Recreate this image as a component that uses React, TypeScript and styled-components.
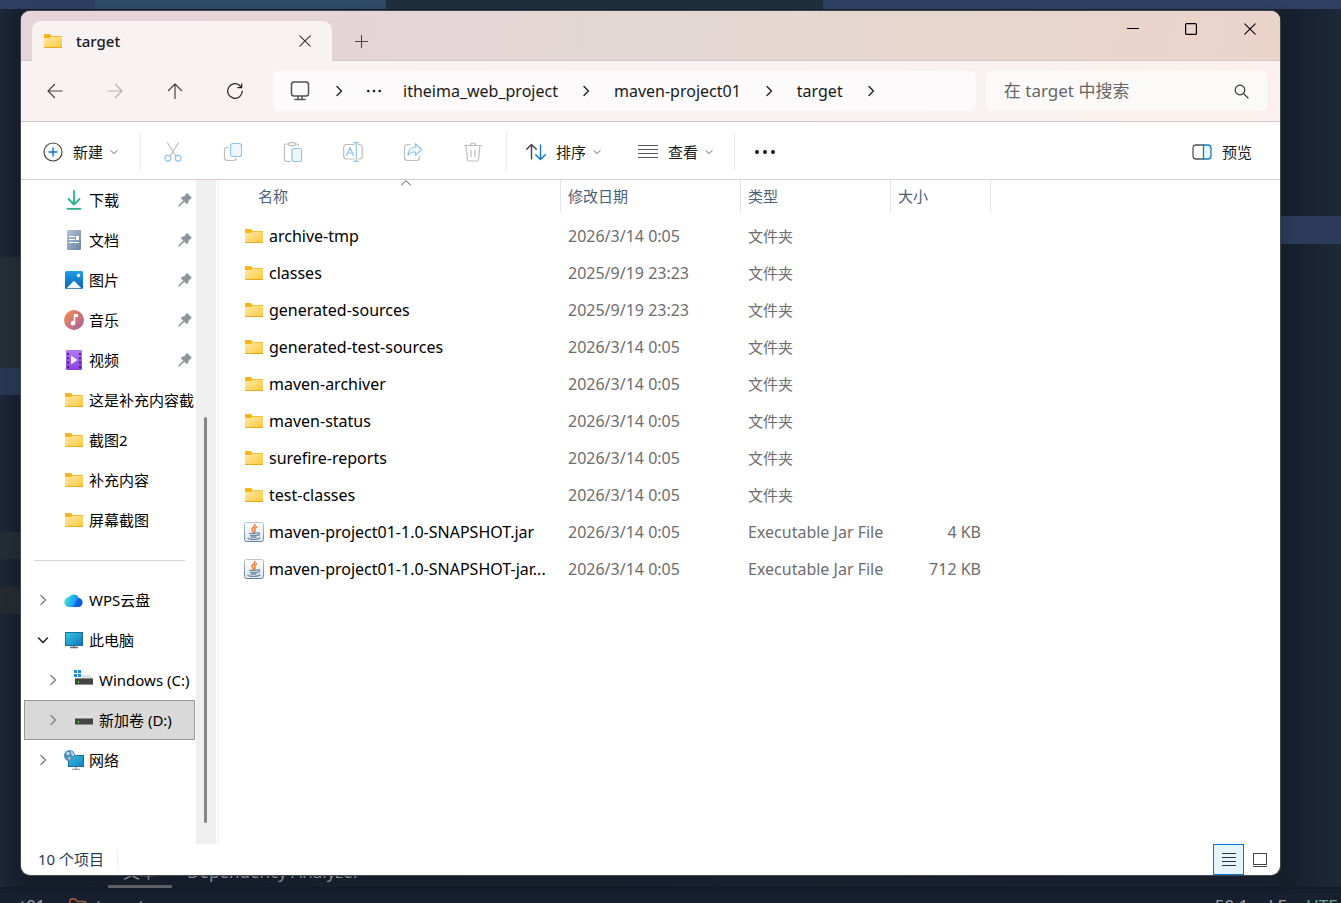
import React from 'react';
import styled, { createGlobalStyle, css } from 'styled-components';

const Global = createGlobalStyle`
  * { box-sizing: border-box; }
  body { margin: 0; background: #1b2434; font-family: "Noto Sans", "Noto Sans CJK SC", sans-serif; font-size: 15px; line-height: 20px; color: #1a1a1a; }
  button, input { font: inherit; color: inherit; }
  svg { display: block; flex: none; }
`;

const Desktop = styled.div`
  position: relative;
  display: flex;
  flex-direction: column;
  min-height: 100vh;
  overflow: hidden;
  background: linear-gradient(90deg, #1c2738 0, #18202f 21px, #1b2434 94%, #171f2d 96%, #1d2839 100%);
`;

const Editor = styled.div`
  position: absolute;
  inset: 0;
  display: flex;
  flex-direction: column;
  color: #9a9ea6;
  font-size: 17px;
`;

const EditorTop = styled.div`
  display: grid;
  grid-template-columns: 95px 291px 437px 1fr;
  height: 9px;
  flex: none;
`;

const Band = styled.div<{ $tone: string }>`
  background: ${(p) => p.$tone};
`;

const EditorBody = styled.div`
  flex: 1;
  display: flex;
  justify-content: space-between;
`;

const Gutter = styled.div<{ $width: number }>`
  width: ${(p) => p.$width}px;
  display: flex;
  flex-direction: column;
`;

const GutterBand = styled.div<{ $gap: number; $height: number; $tone: string }>`
  margin-top: ${(p) => p.$gap}px;
  height: ${(p) => p.$height}px;
  background: ${(p) => p.$tone};
`;

const EditorTabs = styled.div`
  display: flex;
  height: 32px;
  padding-left: 108px;
  border-bottom: 2px solid #131a26;
  flex: none;
`;

const EditorTab = styled.div<{ $active?: boolean }>`
  height: 31px;
  padding: 2px 15px 0;
  line-height: 26px;
  white-space: nowrap;
  ${(p) => p.$active && css`border-bottom: 3px solid #62666b;`}
`;

const EditorStatus = styled.div`
  display: flex;
  justify-content: space-between;
  height: 14px;
  padding: 5px 4px 0 20px;
  line-height: 24px;
  overflow: hidden;
  background: #182030;
  flex: none;
`;

const StatusGroup = styled.div<{ $gap: number }>`
  display: flex;
  align-items: flex-start;
  gap: ${(p) => p.$gap}px;
`;

const Encoding = styled.span`
  color: #6ea78f;
`;

const Window = styled.main`
  position: relative;
  flex: 1;
  display: flex;
  flex-direction: column;
  margin: 11px 61px 28px 21px;
  border-radius: 9px;
  overflow: hidden;
  background: #fff;
  box-shadow: 0 0 0 1px #424852, 0 6px 20px rgba(0, 0, 0, 0.2);
`;

const TitleBar = styled.header`
  display: flex;
  align-items: flex-end;
  height: 50px;
  padding-left: 11px;
  background: linear-gradient(100deg, #e7d3d9 0%, #e7d3d9 15%, #e2d7d4 48%, #e7d6cd 75%, #ebd3ca 100%);
  border-bottom: 1px solid #d9c6c9;
`;

const Tab = styled.div`
  display: flex;
  align-items: center;
  width: 300px;
  height: 40px;
  margin-bottom: -1px;
  padding: 0 21px 0 11px;
  border-radius: 9px 9px 0 0;
  background: #f8f2f3;
`;

const TabTitle = styled.span`
  flex: 1;
  padding-left: 13px;
  font-weight: 500;
`;

const PlainButton = styled.button`
  display: flex;
  align-items: center;
  justify-content: center;
  flex: none;
  padding: 0;
  border: 0;
  background: none;
`;

const NewTab = styled(PlainButton)`
  width: 58px;
  height: 38px;
`;

const Caption = styled.div`
  display: flex;
  align-self: flex-start;
  margin-left: auto;
`;

const CaptionButton = styled(PlainButton)`
  width: 58px;
  height: 36px;
  &:last-child { width: 60px; }
`;

const NavBar = styled.nav`
  display: grid;
  grid-template-columns: 238px minmax(0, 5fr) minmax(0, 2fr);
  align-items: center;
  gap: 10px;
  height: 61px;
  padding: 0 13px 0 4px;
  background: linear-gradient(90deg, #f8f2f3 0%, #f7f2f1 60%, #fbf0ee 100%);
  border-bottom: 1px solid #d6c8ca;
`;

const NavButtons = styled.div`
  display: flex;
`;

const NavButton = styled(PlainButton)`
  width: 60px;
  height: 40px;
`;

const Address = styled.div`
  display: flex;
  align-items: center;
  height: 40px;
  padding-left: 16px;
  border-radius: 6px;
  background: #fdfafb;
  font-size: 16px;
`;

const AddressPart = styled.button`
  display: flex;
  padding: 0;
  margin-right: 22px;
  border: 0;
  background: none;
  white-space: nowrap;
`;

const Search = styled.label`
  display: flex;
  align-items: center;
  height: 40px;
  padding: 0 18px;
  border-radius: 6px;
  background: #fcfaf9;
  font-size: 17px;
`;

const SearchInput = styled.input`
  flex: 1;
  min-width: 0;
  padding: 0;
  border: 0;
  outline: 0;
  background: none;
  &::placeholder { color: #666; opacity: 1; }
`;

const CommandBar = styled.div`
  display: flex;
  align-items: center;
  height: 58px;
  padding: 2px 28px 0 22px;
  border-bottom: 1px solid #d9ccce;
`;

const Command = styled.button<{ $width: number }>`
  display: flex;
  align-items: center;
  width: ${(p) => p.$width}px;
  height: 40px;
  padding: 0;
  border: 0;
  background: none;
  white-space: nowrap;
`;

const CommandLabel = styled.span`
  margin: 0 7px 0 10px;
`;

const IconCommand = styled(PlainButton)`
  width: 60px;
  height: 40px;
`;

const IconGroup = styled.div<{ $pad: number }>`
  display: flex;
  align-items: center;
  height: 39px;
  padding: 0 3px 0 ${(p) => p.$pad}px;
  border-left: 1px solid #ebebeb;
`;

const PreviewButton = styled(Command)`
  margin-left: auto;
`;

const Body = styled.div`
  flex: 1;
  display: flex;
`;

const Sidebar = styled.aside`
  width: 175px;
  padding-left: 3px;
`;

const TreeRow = styled.button<{ $depth?: number; $selected?: boolean }>`
  display: flex;
  align-items: center;
  width: 171px;
  height: 40px;
  padding: 0 2px 0 ${(p) => (p.$depth ? 21 : 11)}px;
  border: 1px solid ${(p) => (p.$selected ? '#999' : 'transparent')};
  background: ${(p) => (p.$selected ? '#d9d9d9' : 'transparent')};
  color: #000;
  text-align: left;
`;

const Twist = styled.span`
  display: flex;
  flex: none;
  width: 28px;
  padding-left: 1px;
`;

const TreeIcon = styled.span`
  display: flex;
  flex: none;
  width: 20px;
  margin-right: 5px;
`;

const TreeLabel = styled.span`
  flex: 1;
  white-space: nowrap;
`;

const TreeRule = styled.hr`
  width: 151px;
  height: 1px;
  margin: 20px 0 19px 10px;
  border: 0;
  background: #d4d4d4;
`;

const ScrollTrack = styled.div`
  display: flex;
  width: 20px;
  padding: 237px 0 21px 8px;
  background: #efefef;
`;

const ScrollThumb = styled.div`
  width: 3px;
  border-radius: 2px;
  background: #858585;
`;

const Content = styled.section`
  flex: 1;
  min-width: 0;
  margin-left: 2px;
  border-left: 1px solid #f1f1f1;
`;

const Table = styled.table`
  width: 100%;
  border-collapse: separate;
  border-spacing: 0;
  table-layout: fixed;
`;

const Head = styled.th<{ $first?: boolean }>`
  height: 32px;
  padding: 0 0 0 ${(p) => (p.$first ? 39 : 7)}px;
  border-right: 1px solid #e5e5e5;
  color: #4c607a;
  font-weight: 400;
  text-align: left;
  &:last-child { border-right: 0; }
`;

const HeadInner = styled.span`
  display: flex;
  position: relative;
`;

const SortMark = styled.span`
  position: absolute;
  top: -6px;
  left: 142px;
`;

const Cell = styled.td<{ $right?: boolean; $cjk?: boolean }>`
  height: 37px;
  padding: 0 ${(p) => (p.$right ? 10 : 0)}px 0 7px;
  color: #6d6d6d;
  font-size: ${(p) => (p.$cjk ? 15 : 16)}px;
  text-align: ${(p) => (p.$right ? 'right' : 'left')};
  white-space: nowrap;
`;

const NameCell = styled(Cell)`
  padding-left: 25px;
  color: #000;
`;

const NameInner = styled.span`
  display: flex;
  align-items: center;
  gap: 5px;
`;

const SpacerCell = styled.td`
  height: 5px;
  padding: 0;
`;

const StatusBar = styled.footer`
  display: flex;
  height: 31px;
  padding: 0 5px 0 17px;
  color: #1e395b;
`;

const StatusText = styled.span`
  align-self: flex-start;
  margin-top: 5px;
  padding-right: 13px;
  border-right: 1px solid #f0f0f0;
`;

const ViewButtons = styled.div`
  display: flex;
  margin-left: auto;
`;

const ViewButton = styled(PlainButton)<{ $active?: boolean }>`
  width: 31px;
  height: 31px;
  border: 1px solid ${(p) => (p.$active ? '#0078d4' : 'transparent')};
  background: ${(p) => (p.$active ? '#e5f3fb' : 'transparent')};
`;

/* ---------- icons ---------- */

const Line = styled.svg.attrs({ fill: 'none', strokeLinecap: 'round', strokeLinejoin: 'round', 'aria-hidden': true })``;

const FolderIcon = () => (
  <svg width="20" height="20" viewBox="0 0 20 20" aria-hidden="true">
    <defs>
      <linearGradient id="fold" x1="0" y1="0" x2="1" y2="1">
        <stop offset="0" stopColor="#ffe9a6" />
        <stop offset="1" stopColor="#ffc83c" />
      </linearGradient>
    </defs>
    <path d="M1 3.600Q1 3 1.600 3H7L8.500 5H18.400Q19 5 19 5.600V8H1Z" fill="#f8b518" />
    <path d="M1 7H7L8.500 5.800H19V16.400Q19 17 18.400 17H1.600Q1 17 1 16.400Z" fill="url(#fold)" />
    <path d="M1 16H19V16.400Q19 17 18.400 17H1.600Q1 17 1 16.400Z" fill="#eca81f" />
  </svg>
);

const JarIcon = () => (
  <svg width="20" height="20" viewBox="0 0 20 20" aria-hidden="true">
    <defs>
      <linearGradient id="jar" x1="0" y1="0" x2="0" y2="1">
        <stop offset="0" stopColor="#fff" />
        <stop offset="1" stopColor="#dfe5ea" />
      </linearGradient>
      <linearGradient id="jarEdge" x1="0" y1="0" x2="0" y2="1">
        <stop offset="0" stopColor="#b9c6d1" />
        <stop offset="1" stopColor="#6d8296" />
      </linearGradient>
    </defs>
    <rect x="0.500" y="0.500" width="19" height="19" rx="2" fill="url(#jar)" stroke="url(#jarEdge)" />
    <path d="M10.800 2.500C11.500 5 7.500 5.500 8 7.500C8.200 8.800 9.500 9 9.300 10.300M12.800 5C10.500 6 10.200 7 11 8.200C11.400 9 11 9.600 10.500 10.100" fill="none" stroke="#ee7b35" strokeWidth="1.500" strokeLinecap="round" />
    <path d="M5.500 11.300H13M13.500 10.800C16.500 10.500 16 13 13.300 13.500M6.500 13.300H12.500M7 15H12M4 16.200C5 17.800 14 17.800 16 16" fill="none" stroke="#6f8da6" strokeWidth="1.300" strokeLinecap="round" />
  </svg>
);

const DownloadIcon = () => (
  <Line width="20" height="20" viewBox="0 0 20 20" stroke="#23b48a" strokeWidth="1.800">
    <path d="M10 1V14M4.500 9L10 14.500L15.500 9M3.500 18.800H16.500" />
  </Line>
);

const DocumentIcon = () => (
  <svg width="20" height="20" viewBox="0 0 20 20" aria-hidden="true">
    <defs>
      <linearGradient id="doc" x1="0" y1="0" x2="1" y2="1">
        <stop offset="0" stopColor="#b4c5d8" />
        <stop offset="1" stopColor="#67829f" />
      </linearGradient>
    </defs>
    <rect x="3" width="14" height="20" rx="1.300" fill="url(#doc)" />
    <path d="M5 6.500H11M5 9.500H11M5 12.500H15" stroke="#fff" />
    <rect x="12" y="6" width="3" height="4" fill="#fff" />
  </svg>
);

const PictureIcon = () => (
  <svg width="20" height="20" viewBox="0 0 20 20" aria-hidden="true">
    <defs>
      <linearGradient id="pic" x1="0" y1="0" x2="0" y2="1">
        <stop offset="0" stopColor="#1f9de4" />
        <stop offset="1" stopColor="#0c62b8" />
      </linearGradient>
    </defs>
    <rect x="1" y="1" width="18" height="18" rx="1.500" fill="url(#pic)" />
    <circle cx="14.500" cy="5.500" r="1.700" fill="#fff" />
    <path d="M2.500 18.300L9.200 11.400Q10 10.600 10.800 11.400L17.500 18.300Z" fill="#f2f8fd" />
  </svg>
);

const MusicIcon = () => (
  <svg width="20" height="20" viewBox="0 0 20 20" aria-hidden="true">
    <defs>
      <linearGradient id="mus" x1="0" y1="0" x2="1" y2="1">
        <stop offset="0.100" stopColor="#f28b52" />
        <stop offset="1" stopColor="#a35ba8" />
      </linearGradient>
    </defs>
    <circle cx="10" cy="10" r="10" fill="url(#mus)" />
    <path d="M9.800 4H13.800V7H11.300V13A2.300 2.300 0 1 1 9.800 11Z" fill="#fff" />
  </svg>
);

const VideoIcon = () => (
  <svg width="20" height="20" viewBox="0 0 20 20" aria-hidden="true">
    <defs>
      <linearGradient id="vid" x1="0" y1="0" x2="0" y2="1">
        <stop offset="0" stopColor="#b378f0" />
        <stop offset="1" stopColor="#8a3fe0" />
      </linearGradient>
    </defs>
    <rect x="2" width="16" height="20" rx="1.300" fill="url(#vid)" />
    <path d="M4 3V18M16 3V18" stroke="#41207c" strokeWidth="1.800" strokeDasharray="2 2.300" />
    <path d="M7 5.500L13.500 10L7 14.500Z" fill="#f4ecfd" />
  </svg>
);

const CloudIcon = () => (
  <svg width="20" height="20" viewBox="0 0 20 20" aria-hidden="true">
    <defs>
      <linearGradient id="cld" x1="0" y1="0.400" x2="1" y2="0.600">
        <stop offset="0" stopColor="#45e6c6" />
        <stop offset="0.400" stopColor="#25b4f0" />
        <stop offset="1" stopColor="#0f6df0" />
      </linearGradient>
    </defs>
    <path d="M5.500 17A5 5 0 0 1 5 7A5.800 5.800 0 0 1 15 8A4.600 4.600 0 0 1 14.500 17Z" fill="url(#cld)" />
    <path d="M8.500 17C12 14.500 11.500 9.500 15 8A4.600 4.600 0 0 1 14.500 17Z" fill="#0a48d6" opacity="0.600" />
  </svg>
);

const MonitorIcon = () => (
  <svg width="20" height="20" viewBox="0 0 20 20" aria-hidden="true">
    <defs>
      <linearGradient id="mon" x1="0" y1="0" x2="1" y2="1">
        <stop offset="0" stopColor="#35cfe0" />
        <stop offset="1" stopColor="#0f6fc0" />
      </linearGradient>
    </defs>
    <rect x="1.500" y="2.500" width="17" height="13" fill="url(#mon)" stroke="#1b6d99" />
    <path d="M10 16V17.500M6 17.500H14" stroke="#5d6b78" strokeWidth="1.300" />
  </svg>
);

const DriveIcon = ({ system }: { system?: boolean }) => (
  <svg width="20" height="20" viewBox="0 0 20 20" aria-hidden="true">
    <path d="M4 5H16L19 9H1Z" fill="#dfe0e2" />
    <rect x="1" y="8" width="18" height="7" fill="#444" />
    <path d="M1 8.500H19M1 14.500H19" stroke="#8a8c8e" />
    <rect x="4" y="11" width="1" height="2" fill="#4be04b" />
    {system && (
      <>
        <rect width="8" height="8" fill="#fff" />
        <path d="M0 0H3V3H0ZM4 0H7V3H4ZM0 4H3V7H0ZM4 4H7V7H4Z" fill="#1490df" />
      </>
    )}
  </svg>
);

const NetworkIcon = () => (
  <svg width="20" height="20" viewBox="0 0 20 20" aria-hidden="true">
    <defs>
      <linearGradient id="net" x1="0" y1="0" x2="1" y2="1">
        <stop offset="0" stopColor="#35c4e0" />
        <stop offset="1" stopColor="#0f7fc8" />
      </linearGradient>
    </defs>
    <rect x="4.500" y="5.500" width="15" height="11" fill="url(#net)" stroke="#1a6f9e" />
    <path d="M12 17V19M8 19.300H16" stroke="#97a2ab" strokeWidth="1.300" />
    <circle cx="5.500" cy="5.500" r="5.500" fill="#4d93b8" />
    <path d="M2 3C4 1 6 2 6 4C4 6 3 5 2 3ZM7 1C9 2 10 4 10 6C8 6 7 4 7 1ZM4 7L7 8L5 10Z" fill="#c5dfeb" />
  </svg>
);

const PinIcon = () => (
  <svg width="14" height="14" viewBox="0 0 14 14" aria-hidden="true">
    <path d="M8.300 0.700Q9 0.300 9.600 0.800L13.200 4.400Q13.600 5 13 5.600L10.600 7.100L9.700 10.300Q9.100 11 8.500 10.500L6.300 8.400L1.500 13.100L0.600 13.300L0.700 12.400L5.400 7.500L3.300 5.400Q2.900 4.700 3.600 4.200L6.800 3.300Z" fill="#8a949b" stroke="#8a949b" strokeWidth="0.500" />
  </svg>
);

const Chevron = ({ open, size = 12, color = '#7a7a7a', weight = 1.4 }: { open?: boolean; size?: number; color?: string; weight?: number }) => (
  <Line width={size} height={size} viewBox="0 0 12 12" stroke={color} strokeWidth={weight}>
    <path d={open ? 'M1.500 4L6 8.500L10.500 4' : 'M4 1.500L8.500 6L4 10.500'} />
  </Line>
);

const Cut = () => (
  <Line width="20" height="20" viewBox="0 0 20 20" strokeWidth="1.200">
    <path d="M4.500 0.800L12.800 14M15.500 0.800L7.200 14" stroke="#bdbdbd" />
    <circle cx="4.800" cy="16.300" r="2.900" stroke="#8fc5ee" />
    <circle cx="15.200" cy="16.300" r="2.900" stroke="#8fc5ee" />
  </Line>
);
const Copy = () => (
  <Line width="20" height="20" viewBox="0 0 20 20" strokeWidth="1.200">
    <path d="M5 5.500H4Q1.500 5.500 1.500 8.500V15.500Q1.500 18.500 4.500 18.500H10Q13 18.500 13.300 16.500" stroke="#bdbdbd" />
    <rect x="7.500" y="1.500" width="11" height="13" rx="2.500" fill="#f0f8fe" stroke="#8fc5ee" />
  </Line>
);
const Paste = () => (
  <Line width="20" height="20" viewBox="0 0 20 20" strokeWidth="1.200">
    <path d="M7 19.300H3Q1.500 19.300 1.500 17.500V3.500Q1.500 2 3 2H5.500M12 2H14Q15.500 2 15.500 4" stroke="#bdbdbd" />
    <rect x="5.500" y="0.600" width="7" height="3" rx="1.500" stroke="#bdbdbd" />
    <rect x="9" y="6.500" width="9.500" height="13" rx="1.800" fill="#f0f8fe" stroke="#8fc5ee" />
  </Line>
);
const Rename = () => (
  <Line width="20" height="20" viewBox="0 0 20 20" strokeWidth="1.200">
    <path d="M11 2.500H3.500Q0.700 2.500 0.700 5.500V14Q0.700 17 3.500 17H11M15.500 2.500H16.500Q19.300 2.500 19.300 5.500V14Q19.300 17 16.500 17H15.500" stroke="#bdbdbd" />
    <path d="M3.500 13.500L7 5.500L10.500 13.500M4.700 11H9.300M13.300 0.700V19.300M11 0.700H15.600M11 19.300H15.600" stroke="#8fc5ee" />
  </Line>
);
const Share = () => (
  <Line width="20" height="20" viewBox="0 0 20 20" strokeWidth="1.200">
    <path d="M7 2.500H4.500Q1.500 2.500 1.500 5.500V15.500Q1.500 18.500 4.500 18.500H13.500Q16.500 18.500 16.500 15.500V14" stroke="#bdbdbd" />
    <path d="M12.500 1.700L18.700 7.500L12.500 13.300V10C9 9.800 6.500 11 5 13.300C5.200 8.500 8 5.200 12.500 5Z" fill="#f0f8fe" stroke="#8fc5ee" />
  </Line>
);
const Trash = () => (
  <Line width="20" height="20" viewBox="0 0 20 20" strokeWidth="1.200" stroke="#bdbdbd">
    <path d="M1.500 3.500H18.500M3 3.500L4.500 17.500Q4.700 19 6 19H14Q15.300 19 15.500 17.500L17 3.500M7.500 3.500Q7.500 1 10 1Q12.500 1 12.500 3.500M8 8V14.500M12 8V14.500" />
  </Line>
);
const Rows = ({ width, color = '#555' }: { width: number; color?: string }) => (
  <svg width={width} height="14" viewBox={`0 0 ${width} 14`} aria-hidden="true">
    <path d={`M0 0.500H${width}M0 4.500H${width}M0 8.500H${width}M0 12.500H${width}`} stroke={color} />
  </svg>
);
const Dots = ({ size = 20, r = 1.7 }: { size?: number; r?: number }) => (
  <svg width={size} height="6" viewBox={`0 0 ${size} 6`} aria-hidden="true">
    <circle cx={r} cy="3" r={r} fill="#1a1a1a" />
    <circle cx={size / 2} cy="3" r={r} fill="#1a1a1a" />
    <circle cx={size - r} cy="3" r={r} fill="#1a1a1a" />
  </svg>
);

const Cross = ({ size, color = '#1a1a1a' }: { size: number; color?: string }) => (
  <Line width={size} height={size} viewBox="0 0 12 12" stroke={color} strokeWidth="1.100">
    <path d="M0.800 0.800L11.200 11.200M11.200 0.800L0.800 11.200" />
  </Line>
);

/* ---------- data ---------- */

const pinned = [
  { label: '下载', icon: <DownloadIcon /> },
  { label: '文档', icon: <DocumentIcon /> },
  { label: '图片', icon: <PictureIcon /> },
  { label: '音乐', icon: <MusicIcon /> },
  { label: '视频', icon: <VideoIcon /> },
];
const recent = ['这是补充内容截', '截图2', '补充内容', '屏幕截图'];
const tree = [
  { label: 'WPS云盘', icon: <CloudIcon /> },
  { label: '此电脑', icon: <MonitorIcon />, open: true },
  { label: 'Windows (C:)', icon: <DriveIcon system />, depth: 1 },
  { label: '新加卷 (D:)', icon: <DriveIcon />, depth: 1, selected: true },
  { label: '网络', icon: <NetworkIcon /> },
];
const files = [
  { name: 'archive-tmp', date: '2026/3/14 0:05' },
  { name: 'classes', date: '2025/9/19 23:23' },
  { name: 'generated-sources', date: '2025/9/19 23:23' },
  { name: 'generated-test-sources', date: '2026/3/14 0:05' },
  { name: 'maven-archiver', date: '2026/3/14 0:05' },
  { name: 'maven-status', date: '2026/3/14 0:05' },
  { name: 'surefire-reports', date: '2026/3/14 0:05' },
  { name: 'test-classes', date: '2026/3/14 0:05' },
  { name: 'maven-project01-1.0-SNAPSHOT.jar', date: '2026/3/14 0:05', size: '4 KB' },
  { name: 'maven-project01-1.0-SNAPSHOT-jar...', date: '2026/3/14 0:05', size: '712 KB' },
];
const commands = [
  { label: '剪切', icon: <Cut /> },
  { label: '复制', icon: <Copy /> },
  { label: '粘贴', icon: <Paste /> },
  { label: '重命名', icon: <Rename /> },
  { label: '共享', icon: <Share /> },
  { label: '删除', icon: <Trash /> },
];

const Backdrop = () => (
  <Editor aria-hidden="true">
    <EditorTop>
      <Band $tone="#2d3f63" />
      <Band $tone="#2f4b68" />
      <Band $tone="#20303f" />
      <Band $tone="#2e4064" />
    </EditorTop>
    <EditorBody>
      <Gutter $width={21}>
        <GutterBand $gap={248} $height={111} $tone="#232f35" />
        <GutterBand $gap={0} $height={27} $tone="#283854" />
        <GutterBand $gap={137} $height={27} $tone="#222e34" />
        <GutterBand $gap={28} $height={27} $tone="#262b32" />
      </Gutter>
      <Gutter $width={61}>
        <GutterBand $gap={207} $height={28} $tone="#2b3b59" />
      </Gutter>
    </EditorBody>
    <EditorTabs>
      <EditorTab $active>文本</EditorTab>
      <EditorTab>Dependency Analyzer</EditorTab>
    </EditorTabs>
    <EditorStatus>
      <StatusGroup $gap={9}>
        <span>t01</span>
        <span>›</span>
        <Line width="18" height="16" viewBox="0 0 18 16" stroke="#a5623f" strokeWidth="1.500">
          <path d="M1 7Q1 5 3 5H6L8.500 7.500H15Q17 7.500 17 9.500V16H1Z" />
        </Line>
        <span>target</span>
      </StatusGroup>
      <StatusGroup $gap={20}>
        <span>50:1</span>
        <span>LF</span>
        <Encoding>UTF</Encoding>
      </StatusGroup>
    </EditorStatus>
  </Editor>
);

export default function App() {
  return (
    <Desktop>
      <Global />
      <Backdrop />
      <Window>
        <TitleBar>
          <Tab>
            <FolderIcon />
            <TabTitle>target</TabTitle>
            <PlainButton aria-label="关闭标签页"><Cross size={12} color="#333" /></PlainButton>
          </Tab>
          <NewTab aria-label="新建标签页">
            <Line width="13" height="13" viewBox="0 0 13 13" stroke="#444" strokeWidth="1.100"><path d="M6.500 0.500V12.500M0.500 6.500H12.500" /></Line>
          </NewTab>
          <Caption>
            <CaptionButton aria-label="最小化">
              <svg width="12" height="12" viewBox="0 0 12 12"><path d="M0 5.500H12" stroke="#000" /></svg>
            </CaptionButton>
            <CaptionButton aria-label="最大化">
              <svg width="12" height="12" viewBox="0 0 12 12"><rect x="0.600" y="0.600" width="10.800" height="10.800" rx="1" fill="none" stroke="#000" strokeWidth="1.200" /></svg>
            </CaptionButton>
            <CaptionButton aria-label="关闭"><Cross size={12} color="#000" /></CaptionButton>
          </Caption>
        </TitleBar>
        <NavBar>
          <NavButtons>
            <NavButton aria-label="后退"><Line width="16" height="16" viewBox="0 0 16 16" stroke="#444" strokeWidth="1.200"><path d="M15 8H1M7.500 1.500L1 8L7.500 14.500" /></Line></NavButton>
            <NavButton aria-label="前进"><Line width="16" height="16" viewBox="0 0 16 16" stroke="#b5b0b1" strokeWidth="1.200"><path d="M1 8H15M8.500 1.500L15 8L8.500 14.500" /></Line></NavButton>
            <NavButton aria-label="向上"><Line width="16" height="16" viewBox="0 0 16 16" stroke="#444" strokeWidth="1.200"><path d="M8 15.500V1M1.500 7.500L8 1L14.500 7.500" /></Line></NavButton>
            <NavButton aria-label="刷新"><Line width="16" height="16" viewBox="0 0 16 16" stroke="#222" strokeWidth="1.200"><path d="M15.300 8A7.300 7.300 0 1 1 12.500 2.300L14.500 4.500M14.700 0.800V4.600H10.800" /></Line></NavButton>
          </NavButtons>
          <Address>
            <AddressPart aria-label="电脑">
              <Line width="22" height="20" viewBox="0 0 22 20" stroke="#555" strokeWidth="1.500"><rect x="2.500" y="1" width="17" height="14" rx="2.500" /><path d="M9 15.500V17.500M13 15.500V17.500M6 18.500H16" /></Line>
            </AddressPart>
            <AddressPart aria-label="展开"><Chevron color="#222" /></AddressPart>
            <AddressPart aria-label="更多"><Dots size={14} r={1.3} /></AddressPart>
            <AddressPart>itheima_web_project</AddressPart>
            <AddressPart aria-label="展开"><Chevron color="#222" /></AddressPart>
            <AddressPart>maven-project01</AddressPart>
            <AddressPart aria-label="展开"><Chevron color="#222" /></AddressPart>
            <AddressPart>target</AddressPart>
            <AddressPart aria-label="展开"><Chevron color="#222" /></AddressPart>
          </Address>
          <Search>
            <SearchInput type="text" placeholder="在 target 中搜索" aria-label="在 target 中搜索" />
            <Line width="15" height="15" viewBox="0 0 15 15" stroke="#333" strokeWidth="1.200"><circle cx="6" cy="6" r="4.800" /><path d="M9.600 9.600L14 14" /></Line>
          </Search>
        </NavBar>
        <CommandBar>
          <Command $width={97}>
            <Line width="20" height="20" viewBox="0 0 20 20"><circle cx="10" cy="10" r="9" stroke="#444" strokeWidth="1.200" /><path d="M10 6V14M6 10H14" stroke="#0b74c9" strokeWidth="1.400" /></Line>
            <CommandLabel>新建</CommandLabel>
            <Chevron open size={8} color="#555" />
          </Command>
          <IconGroup $pad={2}>
            {commands.map((c) => <IconCommand key={c.label} aria-label={c.label}>{c.icon}</IconCommand>)}
          </IconGroup>
          <IconGroup $pad={19}>
            <Command $width={112}>
              <Line width="20" height="18" viewBox="0 0 20 18" strokeWidth="1.400"><path d="M5.500 16V1.500M0.700 6.300L5.500 1.500L10.300 6.300" stroke="#444" /><path d="M14.500 2V16.500M9.700 11.700L14.500 16.500L19.300 11.700" stroke="#0f7ad6" /></Line>
              <CommandLabel>排序</CommandLabel>
              <Chevron open size={8} color="#555" />
            </Command>
            <Command $width={93}>
              <Rows width={20} />
              <CommandLabel>查看</CommandLabel>
              <Chevron open size={8} color="#555" />
            </Command>
          </IconGroup>
          <IconGroup $pad={0}>
            <IconCommand aria-label="更多"><Dots r={2} /></IconCommand>
          </IconGroup>
          <PreviewButton $width={60}>
            <Line width="20" height="16" viewBox="0 0 20 16" strokeWidth="1.300"><path d="M11.500 1H4Q1 1 1 4V12Q1 15 4 15H11.500" stroke="#555" /><path d="M11.500 1H16Q19 1 19 4V12Q19 15 16 15H11.500Z" fill="#eaf5fd" stroke="#0f7ac8" /></Line>
            <CommandLabel>预览</CommandLabel>
          </PreviewButton>
        </CommandBar>
        <Body>
          <Sidebar>
            {pinned.map((p) => (
              <TreeRow key={p.label}>
                <Twist /><TreeIcon>{p.icon}</TreeIcon><TreeLabel>{p.label}</TreeLabel><PinIcon />
              </TreeRow>
            ))}
            {recent.map((label) => (
              <TreeRow key={label}>
                <Twist /><TreeIcon><FolderIcon /></TreeIcon><TreeLabel>{label}</TreeLabel>
              </TreeRow>
            ))}
            <TreeRule />
            {tree.map((t) => (
              <TreeRow key={t.label} $depth={t.depth} $selected={t.selected}>
                <Twist><Chevron open={t.open} color={t.open ? '#222' : '#858585'} weight={1.5} /></Twist>
                <TreeIcon>{t.icon}</TreeIcon>
                <TreeLabel>{t.label}</TreeLabel>
              </TreeRow>
            ))}
          </Sidebar>
          <ScrollTrack><ScrollThumb /></ScrollTrack>
          <Content>
            <Table>
              <colgroup>
                <col width="342" /><col width="180" /><col width="150" /><col width="100" /><col />
              </colgroup>
              <thead>
                <tr>
                  <Head $first>
                    <HeadInner>
                      名称
                      <SortMark><Line width="12" height="6" viewBox="0 0 12 6" stroke="#555"><path d="M1.500 5L6 0.800L10.500 5" /></Line></SortMark>
                    </HeadInner>
                  </Head>
                  <Head>修改日期</Head>
                  <Head>类型</Head>
                  <Head>大小</Head>
                  <Head as="td" />
                </tr>
                <tr><SpacerCell colSpan={5} /></tr>
              </thead>
              <tbody>
                {files.map((f) => (
                  <tr key={f.name}>
                    <NameCell><NameInner>{f.size ? <JarIcon /> : <FolderIcon />}{f.name}</NameInner></NameCell>
                    <Cell>{f.date}</Cell>
                    <Cell $cjk={!f.size}>{f.size ? 'Executable Jar File' : '文件夹'}</Cell>
                    <Cell $right>{f.size}</Cell>
                    <td />
                  </tr>
                ))}
              </tbody>
            </Table>
          </Content>
        </Body>
        <StatusBar>
          <StatusText>10 个项目</StatusText>
          <ViewButtons>
            <ViewButton $active aria-label="详细信息"><Rows width={14} color="#333" /></ViewButton>
            <ViewButton aria-label="大图标">
              <svg width="14" height="14" viewBox="0 0 14 14"><rect x="0.500" y="0.500" width="13" height="11" fill="none" stroke="#444" /><path d="M0 13.500H14" stroke="#444" /></svg>
            </ViewButton>
          </ViewButtons>
        </StatusBar>
      </Window>
    </Desktop>
  );
}
